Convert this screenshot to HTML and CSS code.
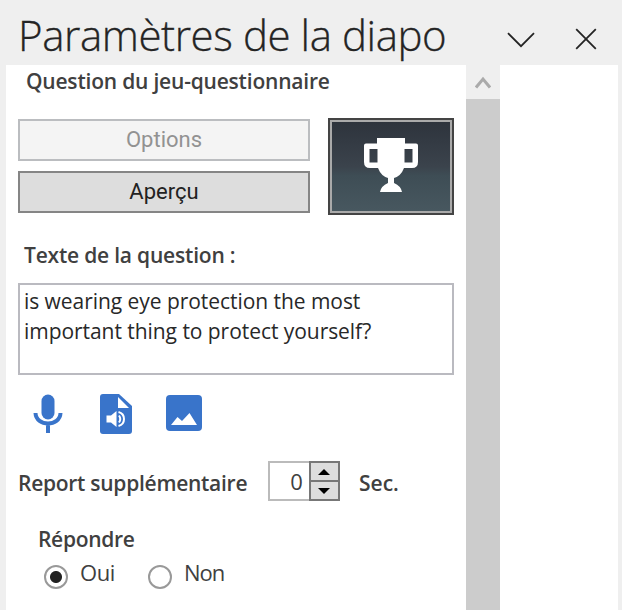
FILE: index.html
```html
<!DOCTYPE html>
<html lang="fr">
<head>
<meta charset="utf-8">
<title>Paramètres de la diapo</title>
<link rel="stylesheet" href="styles.css">
</head>
<body>
<header class="titlebar">
  <h1 class="title">Paramètres de la diapo</h1>
  <svg class="chevron" width="28" height="16" viewBox="0 0 28 16"><path d="M1 1.2 14 14.2 27 1.2"/></svg>
  <svg class="close" width="22" height="22" viewBox="0 0 22 22"><path d="M1.2 1.2 20.8 20.8M20.8 1.2 1.2 20.8"/></svg>
</header>
<main class="pane">
  <section class="content">
    <h2 class="heading">Question du jeu-questionnaire</h2>
    <div class="actions">
      <div class="buttons">
        <button class="btn" disabled>Options</button>
        <button class="btn">Aperçu</button>
      </div>
      <button class="trophy" aria-label="Trophée">
        <svg width="56" height="56" viewBox="0 0 56 56"><path fill-rule="evenodd" d="M14 1H42V6.500H53Q55 6.500 55 8.500V25Q55 31 49 31H41Q38 39 31 41V46Q38 49 39 55H17Q18 49 25 46V41Q18 39 15 31H7Q1 31 1 25V8.500Q1 6.500 3 6.500H14ZM6.500 12V25.500H14.500V12ZM41.500 12V25.500H49.500V12Z"/></svg>
      </button>
    </div>
    <label class="question-label">Texte de la question :</label>
    <div class="question">is wearing eye protection the most<br>important thing to protect yourself?</div>
    <div class="media">
      <svg class="mic" width="30" height="40" viewBox="0 0 30 40"><rect x="8.500" y="0.500" width="13" height="25" rx="6.500"/><path class="line" d="M2.500 19C3 33 27 33 27.500 19M15 30V39"/></svg>
      <svg class="audio" width="34" height="42" viewBox="0 0 34 42"><path d="M4 1H20L33 13V38Q33 41 30 41H4Q1 41 1 38V4Q1 1 4 1Z"/><path class="cut" d="M19 4V15H30Z"/><path class="cut" d="M7.500 22.500H12L17.500 18V34L12 29.500H7.500Z"/><path class="wave" d="M19.500 19Q25 20.500 25 26T19.500 33M20 22.500Q22.500 26 20 29.500"/></svg>
      <svg class="image" width="38" height="38" viewBox="0 0 38 38"><rect x="1" y="1" width="36" height="36" rx="4"/><path class="cut" d="M6 31 12.500 23 17 27 24.500 19 32 31Z"/></svg>
    </div>
    <div class="delay">
      <span class="delay-label">Report supplémentaire</span>
      <div class="spinner">
        <span class="value">0</span>
        <div class="steps">
          <button class="step" aria-label="Augmenter"><svg width="12" height="6" viewBox="0 0 12 6"><path d="M0 6 6 0 12 6Z"/></svg></button>
          <button class="step" aria-label="Diminuer"><svg width="12" height="6" viewBox="0 0 12 6"><path d="M0 0H12L6 6Z"/></svg></button>
        </div>
      </div>
      <span class="seconds">Sec.</span>
    </div>
    <div class="answer">Répondre</div>
    <div class="radios">
      <i class="radio checked"></i><span class="yes">Oui</span>
      <i class="radio"></i><span class="no">Non</span>
    </div>
  </section>
  <div class="scrollbar">
    <div class="up"><svg width="16" height="13" viewBox="0 0 16 13"><path d="M1 11.500 8 3 15 11.500"/></svg></div>
    <div class="thumb"></div>
  </div>
</main>
</body>
</html>
```
FILE: styles.css
```css
* { box-sizing: border-box; }
body { margin: 0; width: 622px; height: 610px; overflow: hidden; background: #efefef; color: #404040; font: 600 21px/30px "Open Sans", sans-serif; }
h1, h2 { margin: 0; }
button { margin: 0; padding: 0; font: inherit; color: inherit; }
svg { display: block; flex: none; }
span { white-space: nowrap; }
.titlebar { display: flex; height: 65px; padding-left: 18px; }
.title { width: 489px; margin-top: 8px; font-size: 42px; line-height: 54px; font-weight: 300; color: #242424; white-space: nowrap; letter-spacing: -0.42px; -webkit-text-stroke: 0.3px #242424; }
.chevron, .close { fill: none; stroke: #242424; stroke-width: 1.8; }
.chevron { margin-top: 32px; }
.close { margin: 28px 0 0 40px; }
.pane { display: flex; width: 612px; height: 545px; margin-left: 6px; background: #fff; }
.content { width: 460px; padding-left: 12px; }
.heading { height: 53px; padding: 1px 0 0 8px; font-size: 21px; line-height: 30px; font-weight: 600; letter-spacing: -0.2px; }
.actions { display: flex; gap: 18px; }
.buttons { display: flex; flex-direction: column; gap: 10px; padding-top: 1px; }
.btn { width: 292px; height: 42px; border: 2px solid #858585; background: #ddd; color: #222; font: 400 22px/38px Roboto, sans-serif; }
.btn:disabled { border-color: #bbbdc0; background: #f4f4f4; color: #929292; }
.trophy { display: flex; justify-content: center; width: 126px; height: 97px; padding-top: 17px; border: 2px solid #444; background: linear-gradient(#2d333c, #3b434c 50%, #3e4d55 60%, #485860); box-shadow: inset 0 0 0 2px #aaa; }
.trophy svg { fill: #fff; }
.question-label { display: block; height: 68px; padding: 25px 0 0 6px; letter-spacing: -0.2px; }
.question { width: 436px; height: 92px; padding: 1px 0 0 4px; border: 2px solid #babac0; font-weight: 400; color: #282828; letter-spacing: -0.05px; }
.media { display: flex; margin-top: 18px; height: 42px; padding-left: 15px; fill: #3974ca; }
.mic { margin-top: 1px; }
.audio { margin-left: 36px; }
.image { margin: 1px 0 0 32px; }
.line { fill: none; stroke: #3974ca; stroke-width: 4; }
.cut { fill: #fff; }
.wave { fill: none; stroke: #fff; stroke-width: 2; }
.delay { display: flex; align-items: center; height: 40px; margin-top: 26px; line-height: 30px; }
.delay-label { width: 250px; padding-top: 4px; letter-spacing: -0.27px; }
.spinner { display: flex; width: 72px; height: 40px; margin-right: 19px; border: 2px solid #bbb; border-right: 0; }
.value { width: 40px; padding-right: 6px; text-align: right; font: 400 22px/36px "Open Sans", sans-serif; }
.steps { display: flex; flex-direction: column; width: 32px; height: 40px; margin-top: -2px; border: 1px solid #777; }
.step { display: flex; flex: 1; align-items: center; justify-content: center; border: 1px solid #777; background: #ddd; }
.seconds { padding-top: 4px; }
.answer { padding: 23px 0 0 20px; letter-spacing: -0.3px; }
.radios { display: flex; height: 36px; padding-left: 26px; font-weight: 400; line-height: 36px; font-size: 22px; }
.radio { width: 24px; height: 24px; margin-top: 11px; border: 2px solid #999; border-radius: 50%; }
.checked { background: radial-gradient(circle, #222 0 5.5px, transparent 6.5px); }
.yes { width: 80px; padding-left: 12px; letter-spacing: -0.4px; }
.no { padding-left: 12px; letter-spacing: -1px; }
.scrollbar { display: flex; flex-direction: column; width: 34px; background: #efefef; }
.up { display: flex; height: 34px; padding: 11px 0 0 9px; fill: none; stroke: #aaa; stroke-width: 3; }
.thumb { flex: 1; background: #ccc; }
```
